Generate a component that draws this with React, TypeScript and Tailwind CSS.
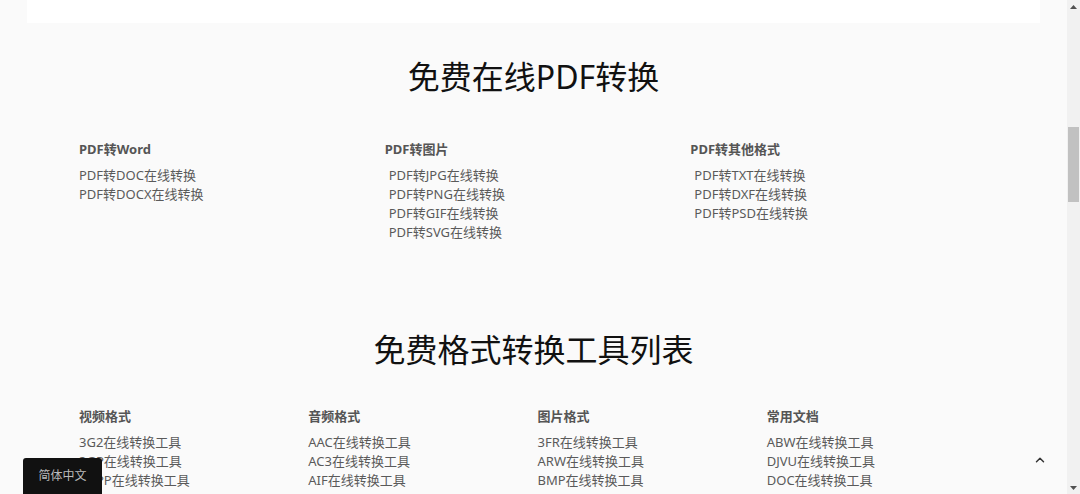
import { ChevronUp } from "lucide-react";

interface Group {
  title: string;
  items: string[];
}

const PDF_GROUPS: Group[] = [
  { title: "PDF转Word", items: ["PDF转DOC在线转换", "PDF转DOCX在线转换"] },
  { title: "PDF转图片", items: ["PDF转JPG在线转换", "PDF转PNG在线转换", "PDF转GIF在线转换", "PDF转SVG在线转换"] },
  { title: "PDF转其他格式", items: ["PDF转TXT在线转换", "PDF转DXF在线转换", "PDF转PSD在线转换"] },
];

const TOOL_GROUPS: Group[] = [
  { title: "视频格式", items: ["3G2", "3GP", "3GPP"].map((f) => `${f}在线转换工具`) },
  { title: "音频格式", items: ["AAC", "AC3", "AIF"].map((f) => `${f}在线转换工具`) },
  { title: "图片格式", items: ["3FR", "ARW", "BMP"].map((f) => `${f}在线转换工具`) },
  { title: "常用文档", items: ["ABW", "DJVU", "DOC"].map((f) => `${f}在线转换工具`) },
];

function ColumnGroup({ group, indent }: { group: Group; indent?: boolean }) {
  return (
    <div className="pl-[4px]">
      <h3 className="text-[13px] leading-[20px] font-bold text-[#555]">{group.title}</h3>
      <ul className={`mt-[7px] text-[13px] leading-[19px] ${indent ? "pl-[4px]" : ""}`}>
        {group.items.map((item) => (
          <li key={item} className="h-[19px]">
            <a href="#" className="text-[#5a5a5a] hover:text-[#222]">
              {item}
            </a>
          </li>
        ))}
      </ul>
    </div>
  );
}

export default function App() {
  return (
    <div
      className="flex h-[494px] w-[1080px] overflow-hidden bg-[#fafafa]"
      style={{ fontFamily: '"Noto Sans", "Noto Sans CJK SC", sans-serif' }}
    >
      <main className="relative flex-1">
        <div className="mx-auto h-[23px] w-[1013px] bg-white" />

        {/* PDF section */}
        <section className="mt-[34px]">
          <h2 className="text-center text-[32px] leading-[40px] font-normal text-[#111]">免费在线PDF转换</h2>
          <div className="mx-auto mt-[42px] grid w-[917px] grid-cols-3">
            {PDF_GROUPS.map((g, i) => (
              <ColumnGroup key={g.title} group={g} indent={i > 0} />
            ))}
          </div>
        </section>

        {/* Tools list */}
        <section className="mt-[88px]">
          <h2 className="text-center text-[32px] leading-[40px] font-normal text-[#111]">免费格式转换工具列表</h2>
          <div className="mx-auto mt-[36px] grid w-[917px] grid-cols-4">
            {TOOL_GROUPS.map((g) => (
              <ColumnGroup key={g.title} group={g} />
            ))}
          </div>
        </section>

        <button className="absolute bottom-0 left-[23px] h-[36px] w-[79px] rounded-t-[3px] bg-[#111] text-[12px] text-[#bbb]">
          简体中文
        </button>

        <button className="absolute top-[452px] left-[1031px] flex h-[16px] w-[18px] items-center justify-center text-[#333]">
          <ChevronUp size={14} strokeWidth={2.5} />
        </button>
      </main>

      {/* scrollbar */}
      <div className="flex w-[13px] flex-col items-center bg-[#f1f1f1]">
        <div className="flex h-[13px] w-full items-center justify-center">
          <svg width="7" height="4" viewBox="0 0 7 4">
            <path d="M3.5 0 L7 4 L0 4 Z" fill="#505050" />
          </svg>
        </div>
        <div className="mt-[114px] h-[75px] w-[11px] bg-[#c1c1c1]" />
        <div className="flex-1" />
        <div className="flex h-[13px] w-full items-center justify-center">
          <svg width="7" height="4" viewBox="0 0 7 4">
            <path d="M0 0 L7 0 L3.5 4 Z" fill="#505050" />
          </svg>
        </div>
      </div>
    </div>
  );
}
